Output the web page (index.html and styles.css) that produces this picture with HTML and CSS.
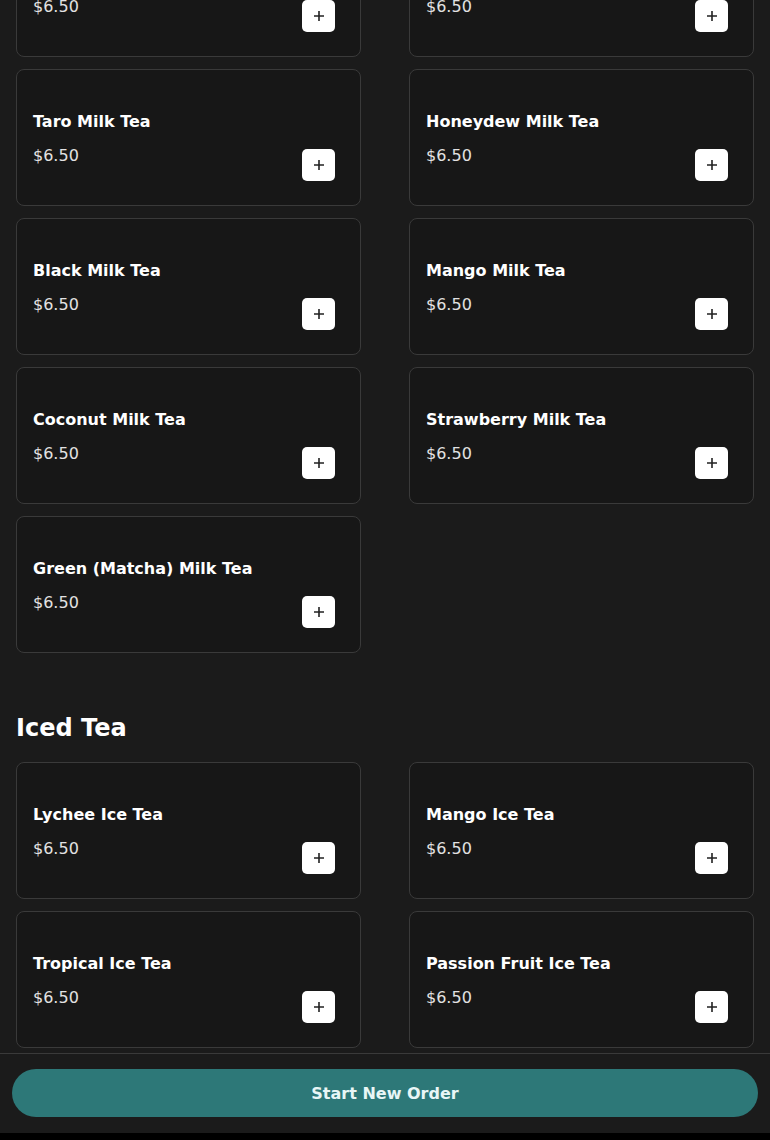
FILE: index.html
```html
<!DOCTYPE html>
<html lang="en">
<head>
    <meta charset="UTF-8">
    <meta name="viewport" content="width=device-width, initial-scale=1.0">
    <title>Menu</title>
    <link rel="stylesheet" href="styles.css">
</head>
<body>
    <main class="menu">
        <section class="section section-cut">
            <div class="grid">
                <div class="card">
                    <h3 class="name">Classic Milk Tea</h3>
                    <div class="row">
                        <span class="price">$6.50</span>
                        <button class="add" aria-label="Add"><svg width="10" height="10" viewBox="0 0 10 10"><path d="M5 0v10M0 5h10" stroke="#222" stroke-width="1.6"/></svg></button>
                    </div>
                </div>
                <div class="card">
                    <h3 class="name">Thai Milk Tea</h3>
                    <div class="row">
                        <span class="price">$6.50</span>
                        <button class="add" aria-label="Add"><svg width="10" height="10" viewBox="0 0 10 10"><path d="M5 0v10M0 5h10" stroke="#222" stroke-width="1.6"/></svg></button>
                    </div>
                </div>
                <div class="card">
                    <h3 class="name">Taro Milk Tea</h3>
                    <div class="row">
                        <span class="price">$6.50</span>
                        <button class="add" aria-label="Add"><svg width="10" height="10" viewBox="0 0 10 10"><path d="M5 0v10M0 5h10" stroke="#222" stroke-width="1.6"/></svg></button>
                    </div>
                </div>
                <div class="card">
                    <h3 class="name">Honeydew Milk Tea</h3>
                    <div class="row">
                        <span class="price">$6.50</span>
                        <button class="add" aria-label="Add"><svg width="10" height="10" viewBox="0 0 10 10"><path d="M5 0v10M0 5h10" stroke="#222" stroke-width="1.6"/></svg></button>
                    </div>
                </div>
                <div class="card">
                    <h3 class="name">Black Milk Tea</h3>
                    <div class="row">
                        <span class="price">$6.50</span>
                        <button class="add" aria-label="Add"><svg width="10" height="10" viewBox="0 0 10 10"><path d="M5 0v10M0 5h10" stroke="#222" stroke-width="1.6"/></svg></button>
                    </div>
                </div>
                <div class="card">
                    <h3 class="name">Mango Milk Tea</h3>
                    <div class="row">
                        <span class="price">$6.50</span>
                        <button class="add" aria-label="Add"><svg width="10" height="10" viewBox="0 0 10 10"><path d="M5 0v10M0 5h10" stroke="#222" stroke-width="1.6"/></svg></button>
                    </div>
                </div>
                <div class="card">
                    <h3 class="name">Coconut Milk Tea</h3>
                    <div class="row">
                        <span class="price">$6.50</span>
                        <button class="add" aria-label="Add"><svg width="10" height="10" viewBox="0 0 10 10"><path d="M5 0v10M0 5h10" stroke="#222" stroke-width="1.6"/></svg></button>
                    </div>
                </div>
                <div class="card">
                    <h3 class="name">Strawberry Milk Tea</h3>
                    <div class="row">
                        <span class="price">$6.50</span>
                        <button class="add" aria-label="Add"><svg width="10" height="10" viewBox="0 0 10 10"><path d="M5 0v10M0 5h10" stroke="#222" stroke-width="1.6"/></svg></button>
                    </div>
                </div>
                <div class="card">
                    <h3 class="name">Green (Matcha) Milk Tea</h3>
                    <div class="row">
                        <span class="price">$6.50</span>
                        <button class="add" aria-label="Add"><svg width="10" height="10" viewBox="0 0 10 10"><path d="M5 0v10M0 5h10" stroke="#222" stroke-width="1.6"/></svg></button>
                    </div>
                </div>
            </div>
        </section>

        <section class="section">
            <h2 class="section-title">Iced Tea</h2>
            <div class="grid">
                <div class="card">
                    <h3 class="name">Lychee Ice Tea</h3>
                    <div class="row">
                        <span class="price">$6.50</span>
                        <button class="add" aria-label="Add"><svg width="10" height="10" viewBox="0 0 10 10"><path d="M5 0v10M0 5h10" stroke="#222" stroke-width="1.6"/></svg></button>
                    </div>
                </div>
                <div class="card">
                    <h3 class="name">Mango Ice Tea</h3>
                    <div class="row">
                        <span class="price">$6.50</span>
                        <button class="add" aria-label="Add"><svg width="10" height="10" viewBox="0 0 10 10"><path d="M5 0v10M0 5h10" stroke="#222" stroke-width="1.6"/></svg></button>
                    </div>
                </div>
                <div class="card">
                    <h3 class="name">Tropical Ice Tea</h3>
                    <div class="row">
                        <span class="price">$6.50</span>
                        <button class="add" aria-label="Add"><svg width="10" height="10" viewBox="0 0 10 10"><path d="M5 0v10M0 5h10" stroke="#222" stroke-width="1.6"/></svg></button>
                    </div>
                </div>
                <div class="card">
                    <h3 class="name">Passion Fruit Ice Tea</h3>
                    <div class="row">
                        <span class="price">$6.50</span>
                        <button class="add" aria-label="Add"><svg width="10" height="10" viewBox="0 0 10 10"><path d="M5 0v10M0 5h10" stroke="#222" stroke-width="1.6"/></svg></button>
                    </div>
                </div>
            </div>
        </section>
    </main>

    <footer class="order-bar">
        <button class="order-button">Start New Order</button>
    </footer>
</body>
</html>
```

FILE: styles.css
```css
body {
    margin: 0;
    background-color: #1b1b1b;
    color: #fff;
    font-family: "DejaVu Sans", Verdana, sans-serif;
}
.menu {
    padding: 0 16px 120px;
}
/* page is scrolled: first row of the list sits above the fold */
.section-cut {
    margin-top: -80px;
}
.section-title {
    margin: 61px 0 20px;
    font-size: 24px;
    line-height: 28px;
    font-weight: bold;
    color: #fff;
}
.grid {
    display: grid;
    grid-template-columns: 1fr 1fr;
    column-gap: 48px;
    row-gap: 12px;
}
.card {
    background-color: #171717;
    border: 1px solid #3a3a3a;
    border-radius: 8px;
    padding: 42px 25px 24px 16px;
}
.name {
    margin: 0;
    font-size: 16px;
    line-height: 19px;
    font-weight: bold;
    color: #fff;
}
.row {
    display: flex;
    justify-content: space-between;
    align-items: flex-start;
    margin-top: 15px;
}
.price {
    font-size: 16px;
    line-height: 19px;
    color: #e2e2e2;
}
.add {
    width: 33px;
    height: 32px;
    margin-top: 3px;
    padding: 0;
    border: none;
    border-radius: 5px;
    background-color: #fff;
    display: flex;
    align-items: center;
    justify-content: center;
    cursor: pointer;
}
.order-bar {
    position: fixed;
    left: 0;
    right: 0;
    bottom: 0;
    background-color: #1b1b1b;
    border-top: 1px solid #3a3a3a;
    border-bottom: 7px solid #000;
    padding: 15px 12px 16px;
}
.order-button {
    display: block;
    width: 100%;
    height: 48px;
    border: none;
    border-radius: 24px;
    background-color: #2d7878;
    color: #e8f6f6;
    font-family: "DejaVu Sans", Verdana, sans-serif;
    font-size: 16px;
    font-weight: bold;
    cursor: pointer;
}
```
